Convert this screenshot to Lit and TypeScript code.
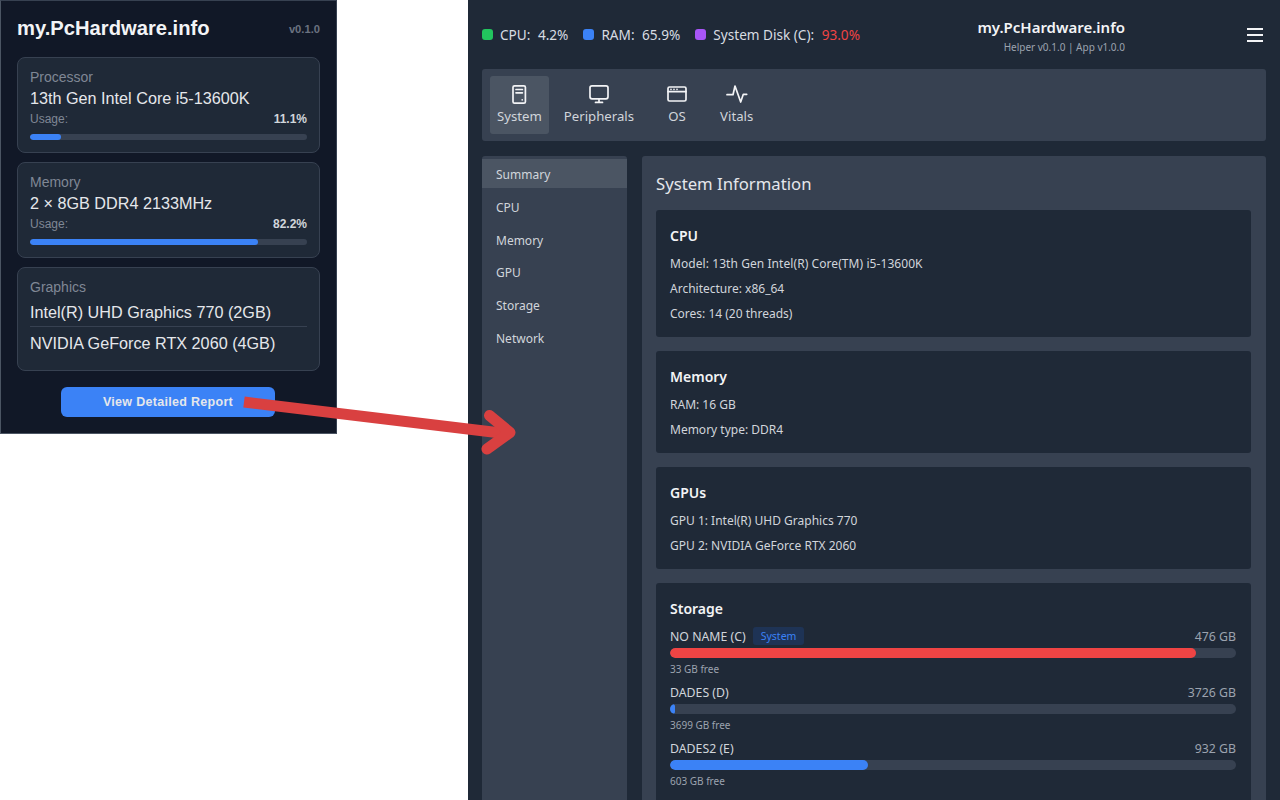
import { LitElement, html, css, svg } from "lit";
import { customElement } from "lit/decorators.js";

const tabs = [
  { name: "System", active: true, icon: svg`<rect x="6" y="3.8" width="12.4" height="17.4" rx="1.5"/><path d="M9 7.5h6.4M9 10.8h6.4M15.2 17.8h.01"/>` },
  { name: "Peripherals", active: false, icon: svg`<rect x="3" y="3.8" width="18" height="13" rx="2"/><path d="M8.5 20.4h7M12 17v3.4"/>` },
  { name: "OS", active: false, icon: svg`<rect x="3" y="5" width="18" height="14" rx="1.5"/><path d="M3 9.6h18M6 7.3h.01M9 7.3h.01M12 7.3h.01"/>` },
  { name: "Vitals", active: false, icon: svg`<path d="M2 12.7h6L10 4l5.7 16 2.6-7.7h3.4"/>` },
];

@customElement("app-root")
export class AppRoot extends LitElement {
  static styles = css`
    :host { display: block; width: 1280px; height: 800px; background: #fff; overflow: hidden; position: relative; }
    .page { display: flex; align-items: flex-start; height: 800px; gap: 131px; }

    .popup { box-sizing: border-box; width: 337px; height: 434px; flex: none; background: #111827; border: 1px solid #4b5563; border-right-color: #374151; border-top-color: #374151; padding: 0 16px; font-family: "Liberation Sans", Arial, sans-serif; display: flex; flex-direction: column; }
    .pop-head { display: flex; justify-content: space-between; align-items: center; height: 54px; margin-bottom: 2px; }
    .pop-title { font-size: 20.2px; font-weight: 700; color: #f3f4f6; }
    .pop-ver { font-size: 11.2px; font-weight: 700; color: #6b7280; margin-top: 2px; }
    .pop-card { box-sizing: border-box; background: #1f2937; border: 1px solid #374151; border-radius: 8px; padding: 11px 12px 12px; margin-bottom: 9px; height: 96px; }
    .pop-card.gfx { height: 104px; margin-bottom: 16px; }
    .pop-label { font-size: 14px; line-height: 16px; color: #7f8795; }
    .pop-value { font-size: 16.2px; line-height: 18px; margin-top: 4px; color: #e5e7eb; }
    .pop-usage { display: flex; justify-content: space-between; font-size: 12px; line-height: 14px; margin-top: 5px; color: #7f8795; }
    .pop-usage b { color: #d1d5db; font-weight: 700; }
    .pop-track { height: 6px; background: #374151; border-radius: 3px; margin-top: 8px; overflow: hidden; }
    .pop-fill { height: 100%; background: #3b82f6; border-radius: 3px; }
    .pop-gpu { font-size: 16.2px; line-height: 18px; color: #e5e7eb; padding: 8px 0 5px; }
    .pop-gpu + .pop-gpu { border-top: 1px solid #374151; padding-top: 7px; }
    .pop-btn { align-self: center; width: 214px; height: 30px; border-radius: 6px; background: #3b82f6; color: #e5e7eb; font-size: 12.5px; font-weight: 700; letter-spacing: .3px; display: flex; align-items: center; justify-content: center; margin-left: -1px; }

    .app { flex: none; box-sizing: border-box; width: 812px; height: 800px; background: #1f2937; padding: 0 14px; font-family: "Noto Sans", "Open Sans", sans-serif; color: #e5e7eb; overflow: hidden; }
    .top { height: 69px; display: flex; align-items: center; justify-content: space-between; }
    .stats { display: flex; align-items: center; font-size: 13.6px; color: #d8dce2; }
    .stat { display: flex; align-items: center; margin-right: 15px; }
    .dot { width: 11px; height: 11px; border-radius: 3px; margin-right: 7px; }
    .val { margin-left: 7.5px; }
    .red { color: #ef4444; }
    .brand { margin-left: auto; margin-right: 118px; text-align: right; }
    .brand-t { font-size: 15px; font-weight: 600; color: #f3f4f6; line-height: 20px; margin-top: 3px; }
    .brand-s { font-size: 10px; color: #9ca3af; line-height: 16px; margin-top: 2px; }
    .burger { margin-right: -1px; width: 24px; height: 24px; color: #f3f4f6; }

    .tabs { display: flex; background: #374151; height: 72px; border-radius: 3px; padding: 7px 8px; box-sizing: border-box; gap: 8px; margin-bottom: 15px; }
    .tab { box-sizing: border-box; height: 58px; padding: 6px 7px 0; border-radius: 3px; display: flex; flex-direction: column; align-items: center; font-size: 13.2px; color: #d1d5db; line-height: 20px; }
    .tab svg { width: 24px; height: 24px; flex: none; fill: none; stroke: #f3f4f6; stroke-width: 1.7; stroke-linecap: round; stroke-linejoin: round; }
    .tab.active { background: #4b5563; }
    .tab.wide { min-width: 56px; }

    .body { display: flex; gap: 15px; }
    .side { width: 145px; flex: none; background: #374151; height: 644px; border-radius: 3px 3px 0 0; padding-top: 3px; box-sizing: border-box; }
    .side-i { height: 32.7px; box-sizing: border-box; padding: 2px 0 0 14px; display: flex; align-items: center; font-size: 12px; color: #d1d5db; }
    .side-i.active { background: #4b5563; height: 29px; margin-bottom: 2px; }
    .main { flex: 1; background: #374151; border-radius: 3px 3px 0 0; padding: 14px 15px 0 14px; height: 644px; box-sizing: border-box; }
    .main h2 { margin: 0 0 12px; font-size: 16.7px; font-weight: 400; line-height: 28px; color: #e5e7eb; }
    .card { background: #1f2937; border-radius: 3px; padding: 15px 15px 11.5px 14px; margin-bottom: 14px; box-sizing: border-box; }
    .card h3 { margin: 0 0 3.5px; font-size: 14px; font-weight: 600; line-height: 22px; color: #f3f4f6; }
    .card h3.flush { margin: 0; }
    .card p { margin: 0; font-size: 12px; line-height: 25px; color: #d1d5db; }
    .card p.spread { letter-spacing: .07px; }
    .rows { margin-top: 8px; }
    .row { display: flex; justify-content: space-between; align-items: center; height: 16px; font-size: 12.3px; color: #d1d5db; }
    .row-l { display: flex; align-items: center; }
    .row-r { color: #9ca3af; }
    .badge { background: #1e3355; color: #3b82f6; font-size: 10.5px; padding: 0 8px; border-radius: 3px; margin-left: 7px; line-height: 18px; }
    .dtrack { height: 10px; background: #374151; border-radius: 5px; margin-top: 4px; overflow: hidden; }
    .dfill { height: 100%; border-radius: 5px; background: #3b82f6; }
    .dfill.crit { background: #ef4444; }
    .free { font-size: 10px; line-height: 14px; color: #9ca3af; margin: 4px 0 8px; }

    .arrow { position: absolute; left: 240px; top: 390px; width: 290px; height: 70px; pointer-events: none; }
  `;

  render() {
    return html`
      <div class="page">
        <section class="popup">
          <div class="pop-head"><div class="pop-title">my.PcHardware.info</div><div class="pop-ver">v0.1.0</div></div>
          <div class="pop-card">
            <div class="pop-label">Processor</div>
            <div class="pop-value">13th Gen Intel Core i5-13600K</div>
            <div class="pop-usage"><span>Usage:</span><b>11.1%</b></div>
            <div class="pop-track"><div class="pop-fill" style="width:11.1%"></div></div>
          </div>
          <div class="pop-card">
            <div class="pop-label">Memory</div>
            <div class="pop-value">2 × 8GB DDR4 2133MHz</div>
            <div class="pop-usage"><span>Usage:</span><b>82.2%</b></div>
            <div class="pop-track"><div class="pop-fill" style="width:82.2%"></div></div>
          </div>
          <div class="pop-card gfx">
            <div class="pop-label">Graphics</div>
            <div class="pop-gpu">Intel(R) UHD Graphics 770 (2GB)</div>
            <div class="pop-gpu">NVIDIA GeForce RTX 2060 (4GB)</div>
          </div>
          <div class="pop-btn">View Detailed Report</div>
        </section>

        <section class="app">
          <header class="top">
            <div class="stats">
              <div class="stat"><i class="dot" style="background:#22c55e"></i>CPU:<span class="val">4.2%</span></div>
              <div class="stat"><i class="dot" style="background:#3b82f6"></i>RAM:<span class="val">65.9%</span></div>
              <div class="stat"><i class="dot" style="background:#a855f7"></i>System Disk (C):<span class="val red">93.0%</span></div>
            </div>
            <div class="brand">
              <div class="brand-t">my.PcHardware.info</div>
              <div class="brand-s">Helper v0.1.0 | App v1.0.0</div>
            </div>
            <svg class="burger" viewBox="0 0 24 24" fill="none" stroke="currentColor" stroke-width="2"><path d="M4 6h16M4 12h16M4 18h16"/></svg>
          </header>
          <nav class="tabs">
            ${tabs.map((t) => html`<div class="tab ${t.active ? "active" : ""} ${t.name === "OS" ? "wide" : ""}"><svg viewBox="0 0 24 24">${t.icon}</svg>${t.name}</div>`)}
          </nav>
          <div class="body">
            <aside class="side">
              ${["Summary", "CPU", "Memory", "GPU", "Storage", "Network"].map((s, i) => html`<div class="side-i ${i === 0 ? "active" : ""}">${s}</div>`)}
            </aside>
            <main class="main">
              <h2>System Information</h2>
              <div class="card">
                <h3>CPU</h3>
                <p class="spread">Model: 13th Gen Intel(R) Core(TM) i5-13600K</p>
                <p>Architecture: x86_64</p>
                <p>Cores: 14 (20 threads)</p>
              </div>
              <div class="card">
                <h3>Memory</h3>
                <p>RAM: 16 GB</p>
                <p>Memory type: DDR4</p>
              </div>
              <div class="card">
                <h3>GPUs</h3>
                <p>GPU 1: Intel(R) UHD Graphics 770</p>
                <p>GPU 2: NVIDIA GeForce RTX 2060</p>
              </div>
              <div class="card">
                <h3 class="flush">Storage</h3>
                <div class="rows">
                  <div class="row"><span class="row-l">NO NAME (C)<span class="badge">System</span></span><span class="row-r">476 GB</span></div>
                  <div class="dtrack"><div class="dfill crit" style="width:93%"></div></div>
                  <div class="free">33 GB free</div>
                  <div class="row"><span class="row-l">DADES (D)</span><span class="row-r">3726 GB</span></div>
                  <div class="dtrack"><div class="dfill" style="width:0.9%"></div></div>
                  <div class="free">3699 GB free</div>
                  <div class="row"><span class="row-l">DADES2 (E)</span><span class="row-r">932 GB</span></div>
                  <div class="dtrack"><div class="dfill" style="width:35%"></div></div>
                  <div class="free">603 GB free</div>
                </div>
              </div>
            </main>
          </div>
        </section>
      </div>
      <svg class="arrow" viewBox="0 0 290 70" fill="none" stroke="#d94040" stroke-linejoin="round">
        <path d="M4 12 L265 43.5" stroke-width="11"/>
        <path d="M249.5 25.5 L270 42.5 L247 59" stroke-width="11" stroke-linecap="round"/>
      </svg>
    `;
  }
}
